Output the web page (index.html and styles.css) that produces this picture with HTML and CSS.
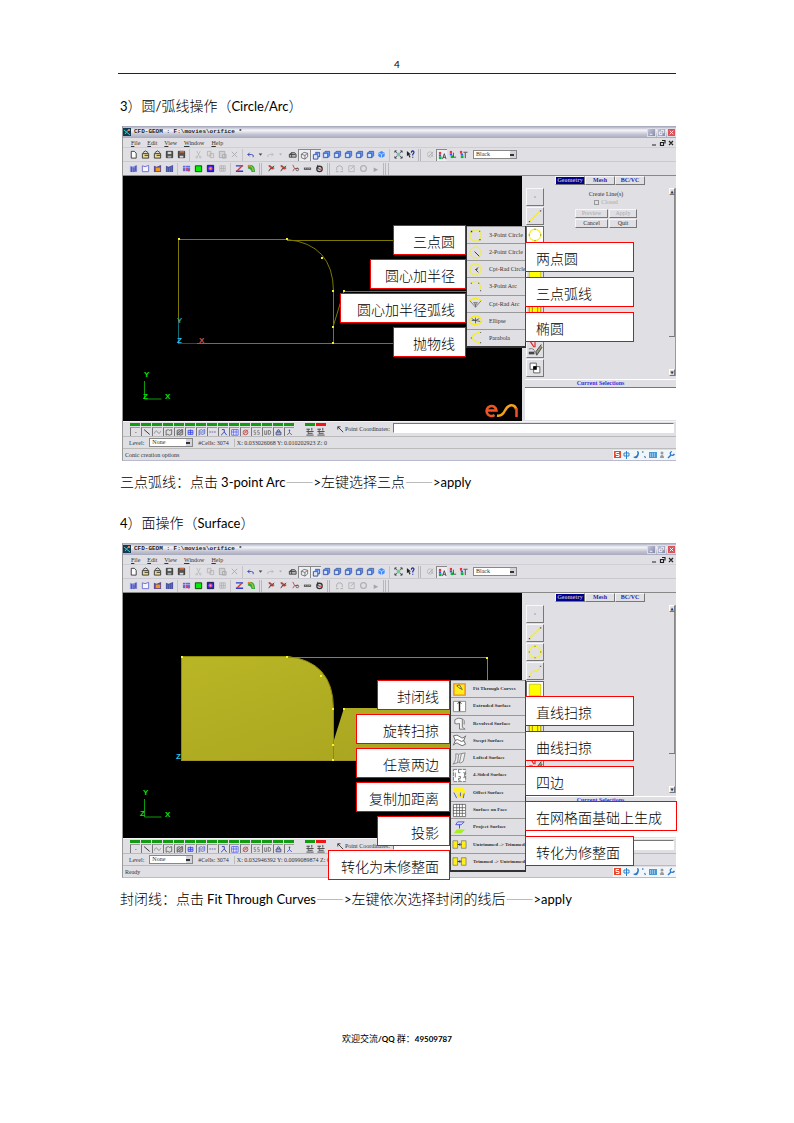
FILE: index.html
```html
<!DOCTYPE html>
<html lang="zh-CN">
<head>
<meta charset="utf-8">
<meta name="viewport" content="width=device-width, initial-scale=1">
<title>CFD-GEOM</title>
<link rel="stylesheet" href="styles.css">
<script src="app.js" defer></script>
</head>
<body>
<svg class="defs" aria-hidden="true">
  <symbol id="new" viewBox="0 0 10 10"><path d="M2.500 1.500h3.500l2 2v5.500h-5.500z" fill="#fff" stroke="#333"/></symbol>
  <symbol id="open" viewBox="0 0 10 10"><path d="M2 3l3-2 3 2" fill="none" stroke="#333"/><path d="M1.500 4h7v5h-7z" fill="#e9d98a" stroke="#333"/><path d="M4 6h4" stroke="#333"/></symbol>
  <symbol id="save" viewBox="0 0 10 10"><path d="M1.500 1.500h7v7h-7z" fill="#555" stroke="#333"/><path d="M3 2h4v2.500h-4z" fill="#cfd8cf"/><path d="M3 6.500h4v2h-4z" fill="#aaa"/></symbol>
  <symbol id="saveas" viewBox="0 0 10 10"><path d="M1.500 1.500h7v7h-7z" fill="#555" stroke="#333"/><path d="M3 1h5v2h-5z" fill="#c96a3a"/><path d="M3 6.500h4v2h-4z" fill="#ddd"/></symbol>
  <symbol id="cut" viewBox="0 0 10 10"><path d="M3 1l3 6M7 1l-3 6" stroke="#bbb" fill="none"/><circle cx="3" cy="8" r="1" fill="none" stroke="#bbb"/><circle cx="7" cy="8" r="1" fill="none" stroke="#bbb"/></symbol>
  <symbol id="copy" viewBox="0 0 10 10"><path d="M1.500 1.500h4v5h-4zM4.500 4h4v4.500h-4z" fill="#ddd" stroke="#b5b5b8"/></symbol>
  <symbol id="paste" viewBox="0 0 10 10"><path d="M1.500 1.500h6v7h-6zM5 5h4v4h-4z" fill="#d2d2d6" stroke="#aaa"/></symbol>
  <symbol id="del" viewBox="0 0 10 10"><path d="M2 2l6 6M8 2l-6 6" stroke="#aaa"/></symbol>
  <symbol id="undo" viewBox="0 0 10 10"><path d="M2 5h4q3 0 2 3M4 3l-2 2 2 2" fill="none" stroke="#3448b8"/></symbol>
  <symbol id="redo" viewBox="0 0 10 10"><path d="M8 5h-4q-3 0-2 3M6 3l2 2-2 2" fill="none" stroke="#bbb"/></symbol>
  <symbol id="down" viewBox="0 0 10 10"><path d="M3 4h4l-2 2.500z" fill="#444"/></symbol>
  <symbol id="downoff" viewBox="0 0 10 10"><path d="M3.500 4h3l-1.500 2z" fill="#aaa"/></symbol>
  <symbol id="wire" viewBox="0 0 10 10"><path d="M1.500 5l2-2h4l1.500 2v3h-7.500zM1.500 5h7M4 3v5" fill="#bbb" stroke="#444"/></symbol>
  <symbol id="box" viewBox="0 0 10 10"><path d="M1.500 3.500l3-2 4 1v4l-3 2.500-4-1.500zM5.500 5v4M1.500 3.500l4 1.500 3-2.500" fill="none" stroke="#555" stroke-width=".8"/></symbol>
  <symbol id="cube1" viewBox="0 0 10 10"><path d="M1.500 4h5v5h-5zM3.500 1.500h5v5h-2" fill="#dfe6f6" stroke="#2a4a96"/><path d="M2 4l2-2h4L6.500 4z" fill="#4a86ff"/></symbol>
  <symbol id="cube2" viewBox="0 0 10 10"><path d="M1.500 3.500l2-2h5v5l-2 2h-5z" fill="#6a9cff" stroke="#34508f" stroke-width=".8"/><path d="M1.500 3.500h5v5" fill="none" stroke="#34508f" stroke-width=".8"/><path d="M2.500 4.500h3v3h-3z" fill="#dfeaff"/></symbol>
  <symbol id="iso" viewBox="0 0 10 10"><path d="M5 1l3.500 2v4l-3.500 2-3.500-2v-4z" fill="#3f8cff"/><path d="M1.500 3l3.500 2 3.500-2M5 5v4" stroke="#b9d7ff" fill="none"/></symbol>
  <symbol id="fit" viewBox="0 0 10 10"><path d="M1 1l8 8M9 1L1 9" stroke="#557"/><path d="M3 3h4v4h-4z" fill="#7cc5a0"/><path d="M1 3V1h2M7 1h2v2M9 7v2H7M3 9H1V7" fill="none" stroke="#333"/></symbol>
  <symbol id="help" viewBox="0 0 10 10"><path d="M1 1v6l1.500-1.500 1.500 3 1-1-1.500-2.500h2z" fill="#222"/><path d="M6 3q0-2 1.500-2 2 .5 1 2.500l-1 1.500v1M7.500 7.500v1.200" fill="none" stroke="#1c2c9c" stroke-width="1.300"/></symbol>
  <symbol id="palette" viewBox="0 0 10 10"><circle cx="4.500" cy="5" r="3" fill="none" stroke="#bbb"/><path d="M3 7l5-5M5 5l3 2" stroke="#aaa"/></symbol>
  <symbol id="colA" viewBox="0 0 10 10"><path d="M1 1h2.500v3H1z" fill="#e33"/><path d="M1 4h2.500v2H1z" fill="#35f"/><path d="M1 6h3v3H1z" fill="#0b3"/><path d="M5 9l2-6 2 6M5.500 7h3" stroke="#444" fill="none"/></symbol>
  <symbol id="colL" viewBox="0 0 10 10"><path d="M2 1h2.500v3H2z" fill="#e33"/><path d="M2 4h2.500v2H2z" fill="#35f"/><path d="M3 6h3v3H3z" fill="#0b3"/><path d="M6 3v5h3" stroke="#444" fill="none"/></symbol>
  <symbol id="colT" viewBox="0 0 10 10"><path d="M1 1h2.500v3H1z" fill="#e33"/><path d="M2 4h2.500v2H2z" fill="#35f"/><path d="M2 6h3v3H2z" fill="#0b3"/><path d="M5 2.500h4.500M7 3v6" stroke="#444" fill="none"/></symbol>
  <symbol id="g1" viewBox="0 0 10 10"><path d="M1 2l2 1 4-1 2-1v8H1z" fill="#8c93dc"/><path d="M3 3v6M5.500 4v5M7.500 2v6" stroke="#3b3f9e"/></symbol>
  <symbol id="g2" viewBox="0 0 10 10"><path d="M1.500 2l3 1 4-1.500v7h-7z" fill="#f4f4ff" stroke="#6a6ad0"/></symbol>
  <symbol id="g3" viewBox="0 0 10 10"><path d="M1 2l3 1 5-2v8H1z" fill="#5b4b98"/><path d="M3 4h5v4H3z" fill="#f09a1c"/></symbol>
  <symbol id="g4" viewBox="0 0 10 10"><path d="M1 2l3 1 5-2v8H1z" fill="#4a53a4"/><path d="M3 4v5M5 4v5M7 3v6" stroke="#7d84c8" stroke-width=".6"/></symbol>
  <symbol id="g5" viewBox="0 0 10 10"><path d="M1 2h8v6H1z" fill="#5a6ae0"/><path d="M3 4l5 4M3 7l3-3" stroke="#e23b4a" stroke-width="1.300"/><path d="M1 4h8M4 2v6" stroke="#dcdcff" stroke-width=".6"/></symbol>
  <symbol id="g6" viewBox="0 0 10 10"><path d="M1.500 2h7v6.500h-7z" fill="#00f000" stroke="#143814"/></symbol>
  <symbol id="g7" viewBox="0 0 10 10"><path d="M1.500 1.500h7v7h-7z" fill="#2424e0" stroke="#16163c"/><circle cx="5" cy="5" r="2.300" fill="#e236c2"/><circle cx="5" cy="5" r="1" fill="#fa4"/></symbol>
  <symbol id="g8" viewBox="0 0 10 10"><path d="M2 2h6v6H2zM4 2v6M6 2v6M2 5h6" fill="none" stroke="#b4b4b8"/></symbol>
  <symbol id="g9" viewBox="0 0 10 10"><path d="M1 2h8M1 8h8" stroke="#2c3fc8" stroke-width="1.500"/><path d="M8 2L2 8" stroke="#d33" stroke-width="1.500"/></symbol>
  <symbol id="g10" viewBox="0 0 10 10"><path d="M1 1h4q4 1 4 8H5Q5 6 1 5z" fill="#2faa3e"/><path d="M1 1h3v2H1z" fill="#ef7a2a"/><path d="M4 2q3 2 3 6" stroke="#d7d03c" fill="none"/></symbol>
  <symbol id="pick" viewBox="0 0 10 10"><path d="M2 2l6 3M2 8l3-5M4 6l4-4" stroke="#5a2f2f"/><path d="M2 1.500h2v2H2zM5 4h2v2H5z" fill="#e0342e"/><path d="M6 3l2 1" stroke="#3a9a4a"/></symbol>
  <symbol id="pick2" viewBox="0 0 10 10"><path d="M2 1l2 4-2 3M4 5h4" stroke="#b44" fill="none"/><circle cx="7" cy="6" r="1.500" fill="none" stroke="#555"/></symbol>
  <symbol id="ruler" viewBox="0 0 10 10"><path d="M1 4h8v2.500H1z" fill="#555"/><path d="M2.500 5h1M5 5h1M7 5h1" stroke="#eee" stroke-width=".7"/></symbol>
  <symbol id="spin" viewBox="0 0 10 10"><circle cx="5" cy="5.500" r="3" fill="none" stroke="#333" stroke-width="1.400"/><path d="M3 1v4l3 1" stroke="#333" fill="none"/><circle cx="6" cy="6" r="1" fill="#d55"/></symbol>
  <symbol id="o1" viewBox="0 0 10 10"><path d="M2 7q-1-5 3-5t3 5M1 8.500h3M6 8.500h3" fill="none" stroke="#aaa"/></symbol>
  <symbol id="o2" viewBox="0 0 10 10"><path d="M2 2h6v6.500H2zM4 6l4-4" fill="none" stroke="#b4b4b8"/></symbol>
  <symbol id="o3" viewBox="0 0 10 10"><circle cx="5" cy="5" r="3.200" fill="none" stroke="#b0b0b4" stroke-width="1.400"/></symbol>
  <symbol id="o4" viewBox="0 0 10 10"><path d="M3 4l5 2.500-5 2.500z" fill="#a4a4aa"/></symbol>
  <symbol id="b1" viewBox="0 0 10 10"><path d="M5 5h1v1H5z" fill="#222"/></symbol>
  <symbol id="b2" viewBox="0 0 10 10"><path d="M2 2l7 6" stroke="#333" stroke-width="1.200"/></symbol>
  <symbol id="b3" viewBox="0 0 10 10"><path d="M1 7q2-6 4-2t4-1" fill="none" stroke="#888"/></symbol>
  <symbol id="b4" viewBox="0 0 10 10"><path d="M2 3l3-1 1 1 3-1v6l-3 1-2-1-2 1z" fill="#ddd" stroke="#555"/></symbol>
  <symbol id="b5" viewBox="0 0 10 10"><path d="M2 3l3-1 1 1 3-1v6l-3 1-2-1-2 1zM2 7l6-5M4 8l5-4" fill="#bbb" stroke="#555"/></symbol>
  <symbol id="b6" viewBox="0 0 10 10"><path d="M2 3h6v5H2zM2 5.500h6M5 2v6" fill="#b9c2ff" stroke="#3a46e6"/></symbol>
  <symbol id="b7" viewBox="0 0 10 10"><path d="M2 3l3-1 1 1 3-1v5l-3 1-2-1-2 2zM2 5h6" fill="none" stroke="#5060c8"/></symbol>
  <symbol id="b8" viewBox="0 0 10 10"><path d="M1 5h8" stroke="#449" stroke-dasharray="2 1"/></symbol>
  <symbol id="b9" viewBox="0 0 10 10"><path d="M3 2h3v3L2 9M6 5l3 4" fill="none" stroke="#3344bc" stroke-width="1.200"/></symbol>
  <symbol id="b10" viewBox="0 0 10 10"><path d="M1.500 2h8v7h-8zM4 2v7M7 2v7M1 5h8" fill="#fff" stroke="#4b58ee"/></symbol>
  <symbol id="b11" viewBox="0 0 10 10"><circle cx="5" cy="5.500" r="3" fill="none" stroke="#a44"/><path d="M2 8l6-6M4 4l3 3" stroke="#c33"/></symbol>
  <symbol id="b12" viewBox="0 0 10 10"><path d="M4 3H2v2.500h2V8H1.500M8.500 3h-2v2.500h2V8H6" fill="none" stroke="#666" stroke-width=".8"/></symbol>
  <symbol id="b13" viewBox="0 0 10 10"><path d="M1.500 3v5h2.500V3M6 3v5h1q2 0 2-2.500T7 3z" fill="none" stroke="#444" stroke-width=".8"/></symbol>
  <symbol id="b14" viewBox="0 0 10 10"><path d="M3.500 5V3q1.500-2 3 0v2M2 5h6v3.500H2z" fill="#aab4ee" stroke="#446"/></symbol>
  <symbol id="b15" viewBox="0 0 10 10"><path d="M5 2v4M2 8.500L5 6l3 2.500M4 3h2" fill="none" stroke="#3a4ad8"/></symbol>
  <symbol id="b16" viewBox="0 0 10 10"><path d="M1 2.500h4M1 5h8M3 7h5M1 9h8M7 1v3" stroke="#444"/><path d="M3 2v6" stroke="#555"/></symbol>
  <symbol id="cursor" viewBox="0 0 10 10"><path d="M2 2l6 6M2 2h3M2 2v3" stroke="#333" fill="none"/></symbol>

  <symbol id="s-point" viewBox="0 0 18 18"><path d="M8.500 8.500h1v1h-1z" fill="#555"/></symbol>
  <symbol id="s-line" viewBox="0 0 18 18"><path d="M3 15L15 3" stroke="#f2ee2a" stroke-width="1.500"/><path d="M2 14.500h1.500v1.500H2zM14.500 2.500H16V4h-1.500z" fill="#555"/></symbol>
  <symbol id="s-circle" viewBox="0 0 18 18"><circle cx="9" cy="9" r="6.500" fill="none" stroke="#f7f03a" stroke-width="1.500"/><path d="M8.500 2h1v1h-1zM8.500 15h1v1h-1zM2 8.500h1v1H2zM15 8.500h1v1h-1z" fill="#444"/></symbol>
  <symbol id="s-curve" viewBox="0 0 18 18"><path d="M3 15q1-6 6-6t6-6" fill="none" stroke="#f2ee2a" stroke-width="1.300"/><path d="M2 14.500h1.500V16H2zM14.500 3H16v1.500h-1.500z" fill="#777"/></symbol>
  <symbol id="s-face" viewBox="0 0 18 18"><path d="M2.500 2.500h13v13h-13z" fill="#ff0" stroke="#b0a800" stroke-width=".7"/></symbol>
  <symbol id="s-vol" viewBox="0 0 18 18"><path d="M2.500 2.500h13v13h-13z" fill="#ff0" stroke="#997f00"/><path d="M6 3v12M12 3v12" stroke="#997f00"/></symbol>
  <symbol id="s-edit" viewBox="0 0 18 18"><path d="M4 1l4 6M9 1v6" stroke="#d22" stroke-width="1.300"/><path d="M2 9q6-2 7 4v2" fill="none" stroke="#777"/><path d="M16 4l-6 8 1 4 6-9" fill="#9a9a75" stroke="#444"/><path d="M2 12h6v3H2z" fill="#444"/></symbol>
  <symbol id="s-bool" viewBox="0 0 18 18"><path d="M3.500 3.500h7v7h-7z" fill="#fff" stroke="#555"/><path d="M7.500 7.500h7v7h-7z" fill="#fff" stroke="#555"/><path d="M7 7h4v4H7z" fill="#000"/></symbol>

  <symbol id="m-c3" viewBox="0 0 16 16"><circle cx="8" cy="8" r="6" fill="none" stroke="#f4ee20"/><path d="M3 3h1.500v1.500H3zM12 3h1v1h-1zM12 12h1.500v1H12z" fill="#333"/></symbol>
  <symbol id="m-c2" viewBox="0 0 16 16"><circle cx="8" cy="8" r="6" fill="none" stroke="#f4ee20"/><path d="M7 7l5 5" stroke="#333"/></symbol>
  <symbol id="m-cr" viewBox="0 0 16 16"><circle cx="8" cy="8" r="6" fill="none" stroke="#f4ee20"/><path d="M11 6L8 8l3 3M8 8h2" stroke="#444" fill="none"/></symbol>
  <symbol id="m-a3" viewBox="0 0 16 16"><path d="M4 4q8-5 10 7" fill="none" stroke="#f4ee20"/><path d="M3 4h1v1H3zM13 12h1v1h-1zM11 4h1v1h-1z" fill="#333"/></symbol>
  <symbol id="m-ac" viewBox="0 0 16 16"><path d="M2 5q6-5 12 0" fill="none" stroke="#f4ee20" stroke-width="1.500"/><path d="M2 5l6 7 6-7M8 12V8M6 7h4l-2 3z" fill="none" stroke="#666" stroke-width=".8"/></symbol>
  <symbol id="m-el" viewBox="0 0 16 16"><ellipse cx="8" cy="8" rx="6.500" ry="4.500" fill="none" stroke="#f4ee20" stroke-width="1.500"/><path d="M4 6l4 2 5 1M8 5v6M4 8h4l4-2" fill="none" stroke="#444" stroke-width=".8"/></symbol>
  <symbol id="m-pa" viewBox="0 0 16 16"><path d="M13 2Q-5 8 13 14" fill="none" stroke="#f4ee20" stroke-width="1.300"/><path d="M13 2h1v1h-1zM13 13h1v1h-1zM3 8h1v1H3z" fill="#333"/></symbol>
  <symbol id="m-fit" viewBox="0 0 16 16"><path d="M2 2h12v12H2z" fill="#ffee1a" stroke="#f18a22" stroke-width="1.500"/><path d="M5 4l3-1 3 5-4-2z" fill="none" stroke="#665"/></symbol>
  <symbol id="m-ext" viewBox="0 0 16 16"><path d="M1.500 2.500h13v11h-13z" fill="#fff" stroke="#888"/><path d="M8 13V3" stroke="#222" stroke-width="1.500"/><path d="M6 5l2-2 2 2" fill="none" stroke="#222"/></symbol>
  <symbol id="m-rev" viewBox="0 0 16 16"><path d="M3 4q3-3 8-1v9l3 2H8V8q-3 1-5 0zM11 3q3 1 2 6" fill="#f4f4f4" stroke="#777"/></symbol>
  <symbol id="m-swp" viewBox="0 0 16 16"><path d="M1.500 3q4-2 7 1t6-1l-2 5 2 4q-4 3-7 0t-6 1l2-5zM3 8q3-2 5 0t5 0" fill="#fff" stroke="#666"/></symbol>
  <symbol id="m-lof" viewBox="0 0 16 16"><path d="M4 3q3 1 5 0l5-1-2 9q-3 3-5 1l-6 2q4-4 3-11zM7 4l-1 8M10 3L8 12" fill="#eee" stroke="#888"/></symbol>
  <symbol id="m-4" viewBox="0 0 16 16"><path d="M1.500 1.500h13v13h-13z" fill="#fff" stroke="#777" stroke-dasharray="4 1"/><path d="M3.500 5v5M12 5h1.500v5H12M7 2v3h2M7 9h2v2H7v2h2" fill="none" stroke="#555" stroke-width=".8"/></symbol>
  <symbol id="m-off" viewBox="0 0 16 16"><path d="M3 2h9l3 7-4-1-6 0-4 0z" fill="#fff21e"/><path d="M5 9h7v4H6z" fill="#ffe91e"/><path d="M2 8l3 6M13 9l-1 5M9 8v4" stroke="#4a58d8" fill="none"/></symbol>
  <symbol id="m-grid" viewBox="0 0 16 16"><path d="M1.500 1.500h13v13h-13zM5 1v13M8 1v13M11 1v13M1 5h13M1 8h13M1 11h13" fill="#fff" stroke="#555" stroke-width=".8"/></symbol>
  <symbol id="m-prj" viewBox="0 0 16 16"><path d="M6 2h7l-3 3H4z" fill="#d9dcff" stroke="#4852e0"/><path d="M8 5v4" stroke="#555"/><path d="M5 10h9l-4 4H2z" fill="#a4f020"/></symbol>
  <symbol id="m-trim" viewBox="0 0 16 16"><path d="M1 4h5v8H1zM10 4h5v8h-5z" fill="#ffee18" stroke="#776" stroke-width=".8"/><path d="M6 8h3M8 6.500L9.500 8 8 9.500" fill="none" stroke="#333"/></symbol>
</svg>

<template id="titlebar">
  <div class="titlebar">
    <svg class="logo" viewBox="0 0 8 8" aria-hidden="true"><path d="M0 0h8v8H0z" fill="#123a52"/><path d="M1 2l6 5M2 6l4-5" stroke="#3fd0c0"/><path d="M5 1h2v2H5z" fill="#d85"/></svg>
    <span class="title">CFD-GEOM : F:\movies\orifice *</span>
    <button class="winbtn" aria-label="Minimize"><svg viewBox="0 0 8 8"><path d="M2 6h3" stroke="#fff"/></svg></button>
    <button class="winbtn" aria-label="Restore"><svg viewBox="0 0 8 8"><path d="M1.500 3.500h3v3h-3zM3.500 1.500h3v3" fill="none" stroke="#fff"/></svg></button>
    <button class="winbtn close" aria-label="Close"><svg viewBox="0 0 8 8"><path d="M2 2l4 4M6 2L2 6" stroke="#fff"/></svg></button>
  </div>
  <div class="menubar">
    <button><u>F</u>ile</button><button><u>E</u>dit</button><button><u>V</u>iew</button><button><u>W</u>indow</button><button><u>H</u>elp</button>
    <svg class="mdi" viewBox="0 0 26 8" aria-hidden="true"><path d="M2 6h4M10.500 3.500h3v3h-3zM12 1.500h3v3M19 2l4 4M23 2l-4 4" fill="none" stroke="#222" stroke-width="1.200"/></svg>
  </div>
  <div class="toolbar main">
    <div class="group" data-icons="new open open save saveas"></div>
    <div class="group sep" data-icons="cut copy paste del"></div>
    <div class="group sep tight" data-icons="undo down redo downoff"></div>
    <div class="group view" data-icons="wire box"></div>
    <div class="group snug" data-icons="cube1 cube2 cube2 cube2 cube2 cube2 iso"></div>
    <div class="group sep" data-icons="fit help"></div>
    <div class="group grip" data-icons="palette"></div>
    <div class="group snug color" data-icons="colA colL colT"></div>
    <select class="picker" aria-label="Color"><option>Black</option></select>
  </div>
  <div class="toolbar second">
    <div class="group" data-icons="g1 g2 g3 g4"></div>
    <div class="group sep" data-icons="g5 g6 g7 g8"></div>
    <div class="group sep" data-icons="g9 g10"></div>
    <div class="group grip" data-icons="pick pick pick2 ruler spin"></div>
    <div class="group grip" data-icons="o1 o2 o3 o4"></div>
    <div class="group grip end"></div>
  </div>
</template>

<template id="filters">
  <div class="group flags" data-icons="b1 b2 b3 b4 b5 b6 b7 b8 b9 b10 b11 b12 b13 b14 b15"></div>
  <div class="group flags plain" data-icons="b16 b16"></div>
  <svg class="cursor" aria-hidden="true"><use href="#cursor"/></svg>
</template>

<template id="tray">
  <svg class="tray" viewBox="0 0 63 10" aria-hidden="true"><path d="M1 1h7v7H1z" fill="#e8482a"/><path d="M6 2.500H3v2h3v2H3" fill="none" stroke="#fff"/><path d="M11 3h5v3h-5zM13.500 1v8" fill="none" stroke="#2e82c8"/><path d="M24 1q2 5-4 6 4 3 5.500-1.500T24 1z" fill="#2e78c4"/><path d="M29 2h1.500M31.500 6l1 2" stroke="#58a" stroke-width="1.300"/><path d="M36 2h8v6h-8z" fill="#4a98d4"/><path d="M37 4h6M37 6h6" stroke="#d4ebfa" stroke-dasharray="1 1"/><circle cx="49" cy="3" r="1.500" fill="#999"/><path d="M47 8q0-3 2-3t2 3z" fill="#999"/><path d="M55 8l3-3" stroke="#2e78c4" stroke-width="1.500"/><path d="M59 1.500q-3 1-1 3.500 2 1 3.500-1" stroke="#2e78c4" stroke-width="1.300" fill="none"/></svg>
</template>

<template id="tabs">
  <div class="tabs"><button class="on">Geometry</button><button>Mesh</button><button>BC/VC</button></div>
</template>

<main class="page">
  <header class="running"><span class="latin">4</span></header>

  <h2><span class="latin">3</span>）圆<span class="latin">/</span>弧线操作（<span class="latin">Circle/Arc</span>）</h2>

  <figure class="shot">
    <div class="window">
      <div class="chrome" data-copy="titlebar"></div>
      <div class="work">
        <svg class="viewport" viewBox="0 0 400 245" preserveAspectRatio="xMinYMin slice" role="img" aria-label="Orifice outline">
          <g fill="none" stroke="#7c7800"><path d="M55.500 63.500H164M164 64.500H365v103M55.500 63.500V167.500H365M221 115.500h144M164 63.500Q210 68 210.500 115V167M221 115l-11 36"/></g>
          <g fill="#f2ee2a"><path d="M55 62h2v2h-2zM163 62h2v2h-2zM198 81h2v2h-2zM209 114h2v2h-2zM209 150h2v2h-2zM209 166h2v2h-2zM220 114h2v2h-2z"/></g>
          <path d="M55.500 146v21" stroke="#126b70"/><path d="M56 167.500h18" stroke="#7a2430"/>
          <g class="axis"><text x="54" y="147" fill="#2b9e9e">Y</text><text x="54" y="167" fill="#28c4ee">Z</text><text x="76" y="167" fill="#c8544c">X</text></g>
          <path d="M21.500 205v18h17" fill="none" stroke="#0c9a0c"/>
          <g class="axis" fill="#00e800"><text x="21" y="201">Y</text><text x="20" y="223">Z</text><text x="42" y="223">X</text></g>
          <path d="M363.500 234.500h10a5 5 0 1 0-2 4.500" fill="none" stroke="#ee5522" stroke-width="2.500"/>
          <path d="M374 239.500q5 1 8-5t8-5q3 1 3 4" fill="none" stroke="#f3a21b" stroke-width="2.500"/><path d="M393.500 232v9" stroke="#ee5522" stroke-width="2.500"/>
        </svg>
        <div class="side">
          <div class="tools" data-icons="s-point s-line s-circle s-curve s-face s-face s-vol s-vol s-edit s-bool" data-on="2"></div>
          <div class="panel">
            <div data-copy="tabs"></div>
            <div class="form">
              <div>Create Line(s)</div>
              <label class="muted"><input type="checkbox" disabled>Closed</label>
              <div class="actions"><button disabled>Preview</button><button disabled>Apply</button><button>Cancel</button><button>Quit</button></div>
            </div>
          </div>
          <div class="scroll"><button aria-label="Scroll up">▲</button><span></span><button aria-label="Scroll down">▼</button></div>
          <div class="selections">Current Selections</div>
        </div>
      </div>
      <div class="filters"><div class="row" data-copy="filters"></div><label for="coord1">Point Coordinates:</label><input id="coord1" type="text"></div>
      <div class="level"><label for="level1">Level:</label><select id="level1" class="picker"><option>None</option></select><span>#Cells: 3074</span><span class="xyz">X: 0.033026068 Y: 0.010202923 Z: 0</span></div>
      <div class="status"><span>Conic creation options</span><div data-copy="tray"></div></div>
    </div>

    <ul class="popup conics">
      <li><svg><use href="#m-c3"/></svg><button>3-Point Circle</button></li>
      <li><svg><use href="#m-c2"/></svg><button>2-Point Circle</button></li>
      <li><svg><use href="#m-cr"/></svg><button>Cpt-Rad Circle</button></li>
      <li><svg><use href="#m-a3"/></svg><button>3-Point Arc</button></li>
      <li><svg><use href="#m-ac"/></svg><button>Cpt-Rad Arc</button></li>
      <li><svg><use href="#m-el"/></svg><button>Ellipse</button></li>
      <li><svg><use href="#m-pa"/></svg><button>Parabola</button></li>
    </ul>
    <ul class="notes left conic-left">
      <li class="w3">三点圆</li><li class="w5">圆心加半径</li><li class="w7">圆心加半径弧线</li><li class="w3">抛物线</li>
    </ul>
    <ul class="notes right conic-right">
      <li>两点圆</li><li>三点弧线</li><li>椭圆</li>
    </ul>
  </figure>

  <p>三点弧线：点击 <span class="latin">3-point Arc</span><span class="dash">——</span><span class="latin">&gt;</span>左键选择三点<span class="dash">——</span><span class="latin">&gt;apply</span></p>

  <h2><span class="latin">4</span>）面操作（<span class="latin">Surface</span>）</h2>

  <figure class="shot">
    <div class="window">
      <div class="chrome" data-copy="titlebar"></div>
      <div class="work">
        <svg class="viewport" viewBox="0 0 400 245" preserveAspectRatio="xMinYMin slice" role="img" aria-label="Orifice surface">
          <defs><linearGradient id="gold" x2="1" y2="1"><stop offset="0" stop-color="#b9b626"/><stop offset="1" stop-color="#a7a21e"/></linearGradient></defs>
          <path d="M58 63H164Q210 69 210 114V150L221 115H365V167H58z" fill="url(#gold)"/>
          <path d="M58.500 63.500H164M164 64.500H364.500V167M58.500 63.500V167M164 63.500Q210 68 210.500 115V167" fill="none" stroke="#8f8b05"/>
          <path d="M58 167.500H364" stroke="#a09428"/>
          <g fill="#f8f420"><path d="M58 63h2v2h-2zM163 63h2v2h-2zM197 82h2v2h-2zM209 115h2v2h-2zM220 115h2v2h-2zM209 151h2v2h-2zM209 166h2v2h-2zM363 64h2v2h-2z"/></g>
          <g class="axis"><text x="53" y="166" fill="#28c4ee">Z</text></g>
          <path d="M21.500 206v18h17" fill="none" stroke="#0c9a0c"/>
          <g class="axis" fill="#00e800"><text x="20" y="202">Y</text><text x="17" y="223">Z</text><text x="42" y="224">X</text></g>
        </svg>
        <div class="side">
          <div class="tools" data-icons="s-point s-line s-circle s-curve s-face s-face s-vol s-vol s-edit s-bool" data-on="4"></div>
          <div class="panel"><div data-copy="tabs"></div></div>
          <div class="scroll"><button aria-label="Scroll up">▲</button><span></span><button aria-label="Scroll down">▼</button></div>
          <div class="selections">Current Selections</div>
        </div>
      </div>
      <div class="filters"><div class="row" data-copy="filters"></div><label for="coord2">Point Coordinates:</label><input id="coord2" type="text"></div>
      <div class="level"><label for="level2">Level:</label><select id="level2" class="picker"><option>None</option></select><span>#Cells: 3074</span><span class="xyz">X: 0.032946392 Y: 0.0099089874 Z: 0</span></div>
      <div class="status"><span>Ready</span><div data-copy="tray"></div></div>
    </div>

    <ul class="popup surfaces">
      <li><svg><use href="#m-fit"/></svg><button>Fit Through Curves</button></li>
      <li><svg><use href="#m-ext"/></svg><button>Extruded Surface</button></li>
      <li><svg><use href="#m-rev"/></svg><button>Revolved Surface</button></li>
      <li><svg><use href="#m-swp"/></svg><button>Swept Surface</button></li>
      <li><svg><use href="#m-lof"/></svg><button>Lofted Surface</button></li>
      <li><svg><use href="#m-4"/></svg><button>4-Sided Surface</button></li>
      <li><svg><use href="#m-off"/></svg><button>Offset Surface</button></li>
      <li><svg><use href="#m-grid"/></svg><button>Surface on Face</button></li>
      <li><svg><use href="#m-prj"/></svg><button>Project Surface</button></li>
      <li><svg><use href="#m-trim"/></svg><button>Untrimmed -&gt; Trimmed</button></li>
      <li><svg><use href="#m-trim"/></svg><button>Trimmed -&gt; Untrimmed</button></li>
    </ul>
    <ul class="notes left surface-left">
      <li class="w3">封闭线</li><li class="w5">旋转扫掠</li><li class="w5">任意两边</li><li class="w5">复制加距离</li><li class="w3">投影</li><li class="w7">转化为未修整面</li>
    </ul>
    <ul class="notes right surface-right">
      <li>直线扫掠</li><li>曲线扫掠</li><li>四边</li><li class="wide">在网格面基础上生成</li><li>转化为修整面</li>
    </ul>
  </figure>

  <p>封闭线：点击 <span class="latin">Fit Through Curves</span><span class="dash">——</span><span class="latin">&gt;</span>左键依次选择封闭的线后<span class="dash">——</span><span class="latin">&gt;apply</span></p>

  <footer>欢迎交流<b>/QQ</b> 群：<b>49509787</b></footer>
</main>
</body>
</html>
```
FILE: styles.css
```css
* { box-sizing: border-box; }

body {
  margin: 0;
  background: #fff;
  color: #000;
  font-family: "Noto Sans CJK SC", sans-serif;
  font-size: 14px;
  font-weight: 300;
}

ul { list-style: none; margin: 0; padding: 0; }
.defs { position: absolute; width: 0; height: 0; }

.page { max-width: 558px; margin: 0 auto; }

.latin { font-family: Lato, sans-serif; font-size: 13px; font-weight: 400; }
.dash { font-family: "Noto Sans CJK SC", sans-serif; color: #888; }

.running {
  margin-top: 56px;
  height: 18px;
  border-bottom: 1px solid #222;
  text-align: center;
  line-height: 17px;
}
.running .latin { font-size: 10px; display: block; }

h2, p {
  margin: 0;
  padding-left: 2px;
  font-size: 14px;
  font-weight: 300;
  line-height: 40px;
}
h2 { padding-top: 12px; line-height: 39px; }
p + h2 { padding-top: 0; line-height: 40px; }

footer { padding-top: 110px; text-align: center; font-size: 9px; line-height: 20px; font-weight: 400; }
footer b { font-family: Lato, sans-serif; font-weight: 700; font-size: 8px; }

/* captured application window */
.shot { position: relative; margin: 0 0 0 4px; }
.shot, .shot button, .shot input, .shot select {
  font-family: "Liberation Serif", serif;
  font-size: 6px;
  line-height: 8px;
  font-weight: 400;
  color: #333;
}
.shot button { border: 0; padding: 0; margin: 0; background: none; }
.shot svg { display: block; }
.window { background: #e0dfe4; border-left: 1px solid #999; border-bottom: 1px solid #b9bacd; }

.titlebar {
  display: flex;
  align-items: center;
  gap: 1px;
  height: 12px;
  background: linear-gradient(#a0a1b6, #f5f5f9 35%, #c3c4d2 70%, #a8a9bd);
}
.logo { width: 8px; height: 8px; margin-right: 2px; }
.title { flex: 1; font: bold 6px/10px "Liberation Mono", monospace; color: #222; }
.shot .winbtn { width: 9px; height: 9px; background: linear-gradient(135deg, #c5c6da, #8588a6); border: 1px solid #dcdde8; }
.shot .winbtn.close { background: #d8545a; }

.menubar { display: flex; gap: 7px; height: 10px; padding-left: 8px; align-items: center; border-bottom: 1px solid #cfced6; }
.mdi { width: 26px; height: 8px; margin-left: auto; }

.toolbar { display: flex; align-items: center; height: 14px; padding-left: 4px; border-bottom: 1px solid #cac9d0; }
.toolbar.second { border-bottom-color: #888; }
.group { display: flex; align-items: center; }
.group button { width: 12px; height: 12px; display: grid; place-items: center; }
.group svg { width: 9px; height: 9px; }
.group.tight button { width: 10px; }
.group.snug button { width: 11px; }
.sep { border-left: 1px solid #c4c3ca; padding-left: 2px; margin-left: 2px; }
.grip { border-left: 3px double #b8b7be; padding-left: 3px; margin-left: 2px; }
.grip.end { height: 12px; border-right: 1px solid #b8b7be; padding: 0 2px 0 0; }
.view { padding-left: 1px; }
.view button:last-child, .snug button:first-child { background: #eeedf1; border-top: 1px solid #888; border-left: 1px solid #888; }
.shot .picker {
  width: 44px;
  height: 9px;
  margin-left: 4px;
  padding: 0 2px;
  appearance: none;
  border: 1px solid #888;
  border-radius: 0;
  background: linear-gradient(#333, #333) no-repeat right 2px center / 4px 2px, linear-gradient(90deg, #fff 86%, #d4d3da 86%);
  line-height: 7px;
}

.work { display: flex; }
.viewport { flex: 1; min-width: 0; height: 245px; background: #000; }
.axis { font: bold 8px "Liberation Sans", sans-serif; }
.side {
  flex: 0 0 154px;
  display: grid;
  grid-template-columns: 19px 1fr 7px;
  grid-template-rows: 203px 9px 33px;
  column-gap: 2px;
  padding-left: 4px;
}
.tools { padding-top: 12px; }
.tools button {
  display: block;
  width: 18px;
  height: 18px;
  margin-bottom: 1px;
}
.shot .tools button { border: 1px solid; border-color: #f8f8fa #777 #777 #f8f8fa; }
.shot .tools button.on { background: #fff; border-color: #666; }
.tools svg { width: 16px; height: 16px; }
.panel { padding: 0 2px 0 8px; }
.tabs { display: grid; grid-template-columns: repeat(3, 1fr); width: 90px; }
.shot .tabs button, .shot .actions button { height: 9px; line-height: 7px; border: 1px solid; border-color: #f6f6f8 #777 #777 #f6f6f8; }
.shot .tabs button { color: #2727a4; font-weight: 700; }
.shot .tabs .on { background: #00008c; color: #aab; }
.form { display: flex; flex-direction: column; align-items: center; padding-top: 5px; width: 102px; }
.form label { display: flex; align-items: center; gap: 2px; }
.form input { appearance: none; width: 5px; height: 5px; margin: 0; border: 1px solid #999; }
.muted, .shot button:disabled { color: #aaa; }
.actions { display: grid; grid-template-columns: 33px 28px; gap: 1px; padding-top: 3px; }
.scroll { display: flex; flex-direction: column; margin-top: 12px; height: 188px; border-right: 1px solid #999; }
.scroll span { flex: 1; margin-bottom: 32px; border-bottom: 1px solid #777; border-right: 1px solid #888; }
.shot .scroll button { height: 7px; font: 4px/5px "DejaVu Sans", sans-serif; border: 1px solid; border-color: #fff #777 #777 #fff; }
.selections {
  grid-column: 1 / -1;
  margin-left: -1px;
  text-align: center;
  color: #3232e0;
  font-weight: 700;
  line-height: 7px;
  border-top: 1px solid #fff;
  border-bottom: 1px solid #777;
  position: relative;
}
.selections::after { content: ""; position: absolute; inset: 8px 0 -33px; background: #fff; }

.filters { display: flex; align-items: center; height: 16px; padding: 0 2px 0 7px; border-bottom: 1px solid #bbb; border-top: 1px solid #f4f4f6; }
.row { display: flex; align-items: center; }
.flags { gap: 1px; }
.shot .flags button { width: 10px; height: 13px; border-top: 3px solid #129a12; padding-top: 1px; }
.flags svg { width: 10px; height: 9px; border-left: 1px solid #777; border-top: 1px solid #999; }
.plain { margin: 0 10px 0 11px; }
.plain svg { border: 0; }
.shot .plain button:last-child { border-top-color: #f31414; }
.cursor { width: 9px; height: 9px; }
.filters input { flex: 1; min-width: 0; height: 10px; margin: 0 0 3px 3px; padding: 0 2px; border: 1px solid; border-color: #777 #fff #fff #777; background: #fff; }

.level { display: flex; align-items: center; height: 12px; padding-left: 6px; gap: 5px; border-bottom: 1px solid #bbb; }
.level .picker { margin-left: 0; }
.xyz { border-left: 1px solid #bbb; padding-left: 2px; }
.status { display: flex; align-items: center; justify-content: space-between; height: 11px; padding-left: 2px; }
.tray { width: 63px; height: 10px; background: #f1f6fa; }

/* pop-up tool lists lying over the window */
.popup {
  position: absolute;
  display: grid;
  grid-auto-rows: 1fr;
  background: #e0dfe4;
  border: solid #333;
  border-width: 0 1px 2px 1px;
}
.popup li { display: flex; align-items: center; gap: 6px; overflow: hidden; border-top: 1px solid #999; padding-left: 1px; white-space: nowrap; }
.popup svg { flex: none; width: 15px; height: 15px; }
.conics { left: 344px; top: 100px; width: 60px; height: 122px; }
.surfaces { left: 328px; top: 137px; width: 76px; height: 192px; }
.shot .surfaces button { font-size: 5px; font-weight: 700; }

/* red-framed notes */
.notes { position: absolute; display: flex; flex-direction: column; }
.notes li {
  height: 30px;
  padding: 2px 9px 0 10px;
  border: 1px solid #f00;
  background: #fff;
  color: #000;
  font: 300 14px/26px "Noto Sans CJK SC", sans-serif;
  white-space: nowrap;
}
.left { align-items: flex-end; text-align: right; gap: 4px; }
.left li { padding-right: 10px; }
.w3 { width: 73px; }
.w5 { width: 96px; }
.w7 { width: 126px; }
.surface-left .w5 { width: 94px; }
.surface-left .w7 { width: 122px; }
.right { gap: 5px; }
.right li { width: 109px; }
.right .wide { width: 152px; }
.conic-left { right: 210px; top: 99px; }
.conic-right { left: 403px; top: 116px; }
.surface-left { right: 226px; top: 137px; }
.surface-right { left: 403px; top: 153px; }
```
FILE: app.js
```js
// Fill the shared window parts of each figure from their templates.
document.querySelectorAll("[data-copy]").forEach((slot) => {
  slot.append(document.getElementById(slot.dataset.copy).content.cloneNode(true));
});

// Build one button for each icon name in a tool group.
document.querySelectorAll("[data-icons]").forEach((group) => {
  group.dataset.icons.split(" ").forEach((name, index) => {
    const button = document.createElement("button");
    button.setAttribute("aria-label", name);
    button.innerHTML = `<svg aria-hidden="true"><use href="#${name}"/></svg>`;
    if (group.dataset.on === String(index)) button.classList.add("on");
    group.append(button);
  });
});
```
